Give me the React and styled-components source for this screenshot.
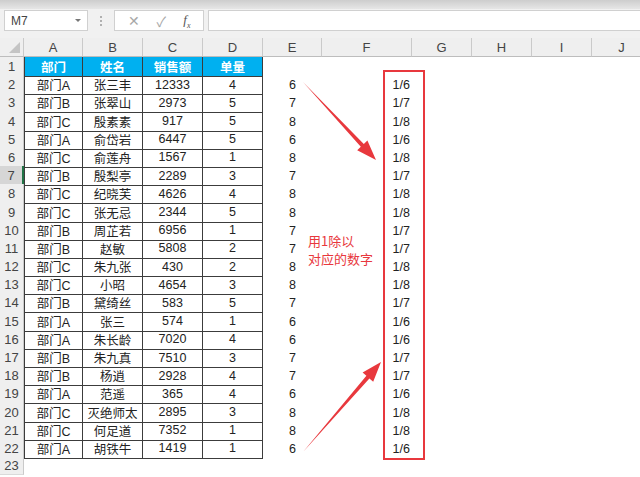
import styled, { createGlobalStyle } from "styled-components";

const GlobalStyle = createGlobalStyle`
  html, body {
    margin: 0;
    padding: 0;
    background: #ffffff;
    overflow: hidden;
  }
  body {
    font-family: "Liberation Sans", "Noto Sans CJK SC", sans-serif;
  }
`;

const COLS = "24px 59px 60px 60px 60px 59px 90px 60px 60px 60px 60px";
const RED = "#e8383d";

const rows = [
    ["部门A", "张三丰", 12333, 4, 6],
    ["部门B", "张翠山", 2973, 5, 7],
    ["部门C", "殷素素", 917, 5, 8],
    ["部门A", "俞岱岩", 6447, 5, 6],
    ["部门C", "俞莲舟", 1567, 1, 8],
    ["部门B", "殷梨亭", 2289, 3, 7],
    ["部门C", "纪晓芙", 4626, 4, 8],
    ["部门C", "张无忌", 2344, 5, 8],
    ["部门B", "周芷若", 6956, 1, 7],
    ["部门B", "赵敏", 5808, 2, 7],
    ["部门C", "朱九张", 430, 2, 8],
    ["部门C", "小昭", 4654, 3, 8],
    ["部门B", "黛绮丝", 583, 5, 7],
    ["部门A", "张三", 574, 1, 6],
    ["部门A", "朱长龄", 7020, 4, 6],
    ["部门B", "朱九真", 7510, 3, 7],
    ["部门B", "杨逍", 2928, 4, 7],
    ["部门A", "范遥", 365, 4, 6],
    ["部门C", "灭绝师太", 2895, 3, 8],
    ["部门C", "何足道", 7352, 1, 8],
    ["部门A", "胡铁牛", 1419, 1, 6],
];

const Page = styled.div`
    position: relative;
    width: 640px;
    height: 477px;
    overflow: hidden;
`;

const TopStrip = styled.div`
    height: 9px;
    background: linear-gradient(#cdcdcd, #e6e6e6);
`;

const FormulaBar = styled.div`
    height: 29px;
    background: #f1f1f1;
    display: flex;
    align-items: flex-start;
    padding: 1px 0 0 4px;
    box-sizing: border-box;
`;

const Box = styled.div`
    height: 21px;
    background: #ffffff;
    border: 1px solid #d0d0d0;
    box-sizing: border-box;
    display: flex;
    align-items: center;
    color: #444;
    font-size: 12px;
`;

const NameBox = styled(Box)`
    width: 84px;
    padding: 0 6px;
    justify-content: space-between;
`;

const Caret = styled.span`
    width: 0;
    height: 0;
    border-left: 3px solid transparent;
    border-right: 3px solid transparent;
    border-top: 3px solid #777;
`;

const Dots = styled.div`
    width: 26px;
    display: flex;
    flex-direction: column;
    align-items: center;
    gap: 2px;
    padding-top: 6px;

    span {
        width: 2px;
        height: 2px;
        background: #b0b0b0;
    }
`;

const FxBox = styled(Box)`
    width: 90px;
    justify-content: space-around;
    padding: 0 4px;
    color: #a8a8a8;
    font-size: 14px;
`;

const Fx = styled.span`
    font-family: "Liberation Serif", serif;
    font-style: italic;
    color: #555;
    font-size: 13px;

    sub {
        font-size: 8px;
    }
`;

const FormulaInput = styled(Box)`
    flex: 1;
    margin-left: 4px;
    border-right: none;
`;

const Row = styled.div`
    display: grid;
    grid-template-columns: ${COLS};
    height: ${(p) => p.$h || "18.2px"};
`;

const ColHead = styled.div`
    background: #efefef;
    border-right: 1px solid #cacaca;
    border-bottom: 1px solid #bdbdbd;
    box-sizing: border-box;
    display: flex;
    align-items: center;
    justify-content: center;
    color: #444;
    font-size: 13px;
    position: relative;
`;

const Corner = styled.span`
    position: absolute;
    right: 3px;
    bottom: 3px;
    width: 0;
    height: 0;
    border-left: 11px solid transparent;
    border-bottom: 11px solid #c4c4c4;
`;

const RowHead = styled.div`
    background: ${(p) => (p.$active ? "#d6d6d6" : "#efefef")};
    border-right: ${(p) => (p.$active ? "2px solid #217346" : "1px solid #cacaca")};
    border-bottom: 1px solid #dadada;
    box-sizing: border-box;
    display: flex;
    align-items: center;
    justify-content: center;
    color: #444;
    font-size: 13px;
`;

const Cell = styled.div`
    box-sizing: border-box;
    display: flex;
    align-items: center;
    justify-content: ${(p) => p.$align || "center"};
    padding-right: ${(p) => (p.$align === "flex-end" ? "2px" : "0")};
    font-size: 12.5px;
    color: #222;
    white-space: nowrap;
    background: ${(p) => (p.$head ? "#00b0f0" : "transparent")};
    ${(p) => p.$head && "color: #ffffff; font-weight: bold;"}
    ${(p) =>
        p.$boxed &&
        `border-right: 1px solid #3c3c3c; border-bottom: 1px solid #3c3c3c;`}
    ${(p) => p.$first && "border-left: 1px solid #3c3c3c;"}
`;

const Overlay = styled.svg`
    position: absolute;
    left: 0;
    top: 0;
    pointer-events: none;
`;

const RedBox = styled.div`
    position: absolute;
    left: 383px;
    top: 70px;
    width: 42px;
    height: 390px;
    border: 2.5px solid ${RED};
    box-sizing: border-box;
`;

const Note = styled.div`
    position: absolute;
    left: 308px;
    top: 232px;
    color: ${RED};
    font-family: "Noto Sans CJK SC", sans-serif;
    font-size: 13px;
    line-height: 18px;
`;

const TableRow = ({ n, data }) => {
    const boxed = !!data;
    const [a, b, c, d, e] = data || [];
    return (
        <Row>
            <RowHead $active={n === 7}>{n}</RowHead>
            <Cell $boxed={boxed} $first={boxed}>{a}</Cell>
            <Cell $boxed={boxed}>{b}</Cell>
            <Cell $boxed={boxed}>{c}</Cell>
            <Cell $boxed={boxed}>{d}</Cell>
            <Cell>{e}</Cell>
            <Cell $align="flex-end">{e ? `1/${e}` : ""}</Cell>
            <Cell />
            <Cell />
            <Cell />
            <Cell />
        </Row>
    );
};

const App = () => {
    return (
        <Page>
            <GlobalStyle />
            <TopStrip />
            <FormulaBar>
                <NameBox>
                    M7
                    <Caret />
                </NameBox>
                <Dots>
                    <span />
                    <span />
                    <span />
                </Dots>
                <FxBox>
                    <span>✕</span>
                    <span>✓</span>
                    <Fx>
                        f<sub>x</sub>
                    </Fx>
                </FxBox>
                <FormulaInput />
            </FormulaBar>

            <Row $h="19px">
                <ColHead>
                    <Corner />
                </ColHead>
                {["A", "B", "C", "D", "E", "F", "G", "H", "I", "J"].map((l) => (
                    <ColHead key={l}>{l}</ColHead>
                ))}
            </Row>

            <Row>
                <RowHead>1</RowHead>
                <Cell $head $boxed $first>部门</Cell>
                <Cell $head $boxed>姓名</Cell>
                <Cell $head $boxed>销售额</Cell>
                <Cell $head $boxed>单量</Cell>
                <Cell />
                <Cell />
                <Cell />
                <Cell />
                <Cell />
                <Cell />
            </Row>

            {rows.map((r, i) => (
                <TableRow key={i} n={i + 2} data={r} />
            ))}
            <TableRow n={23} />

            <RedBox />
            <Note>
                用1除以
                <br />
                对应的数字
            </Note>

            <Overlay width="640" height="477" viewBox="0 0 640 477">
                {/* tapered arrows pointing at the result column */}
                <polygon
                    fill={RED}
                    points="303,82 363.8,144 367.4,140.6 376,160 357.2,150.2 360.8,146.8"
                />
                <polygon
                    fill={RED}
                    points="303,452 369.4,378.4 373.2,381.7 381,362 362.6,372.5 366.4,375.8"
                />
            </Overlay>
        </Page>
    );
};

export default App;
